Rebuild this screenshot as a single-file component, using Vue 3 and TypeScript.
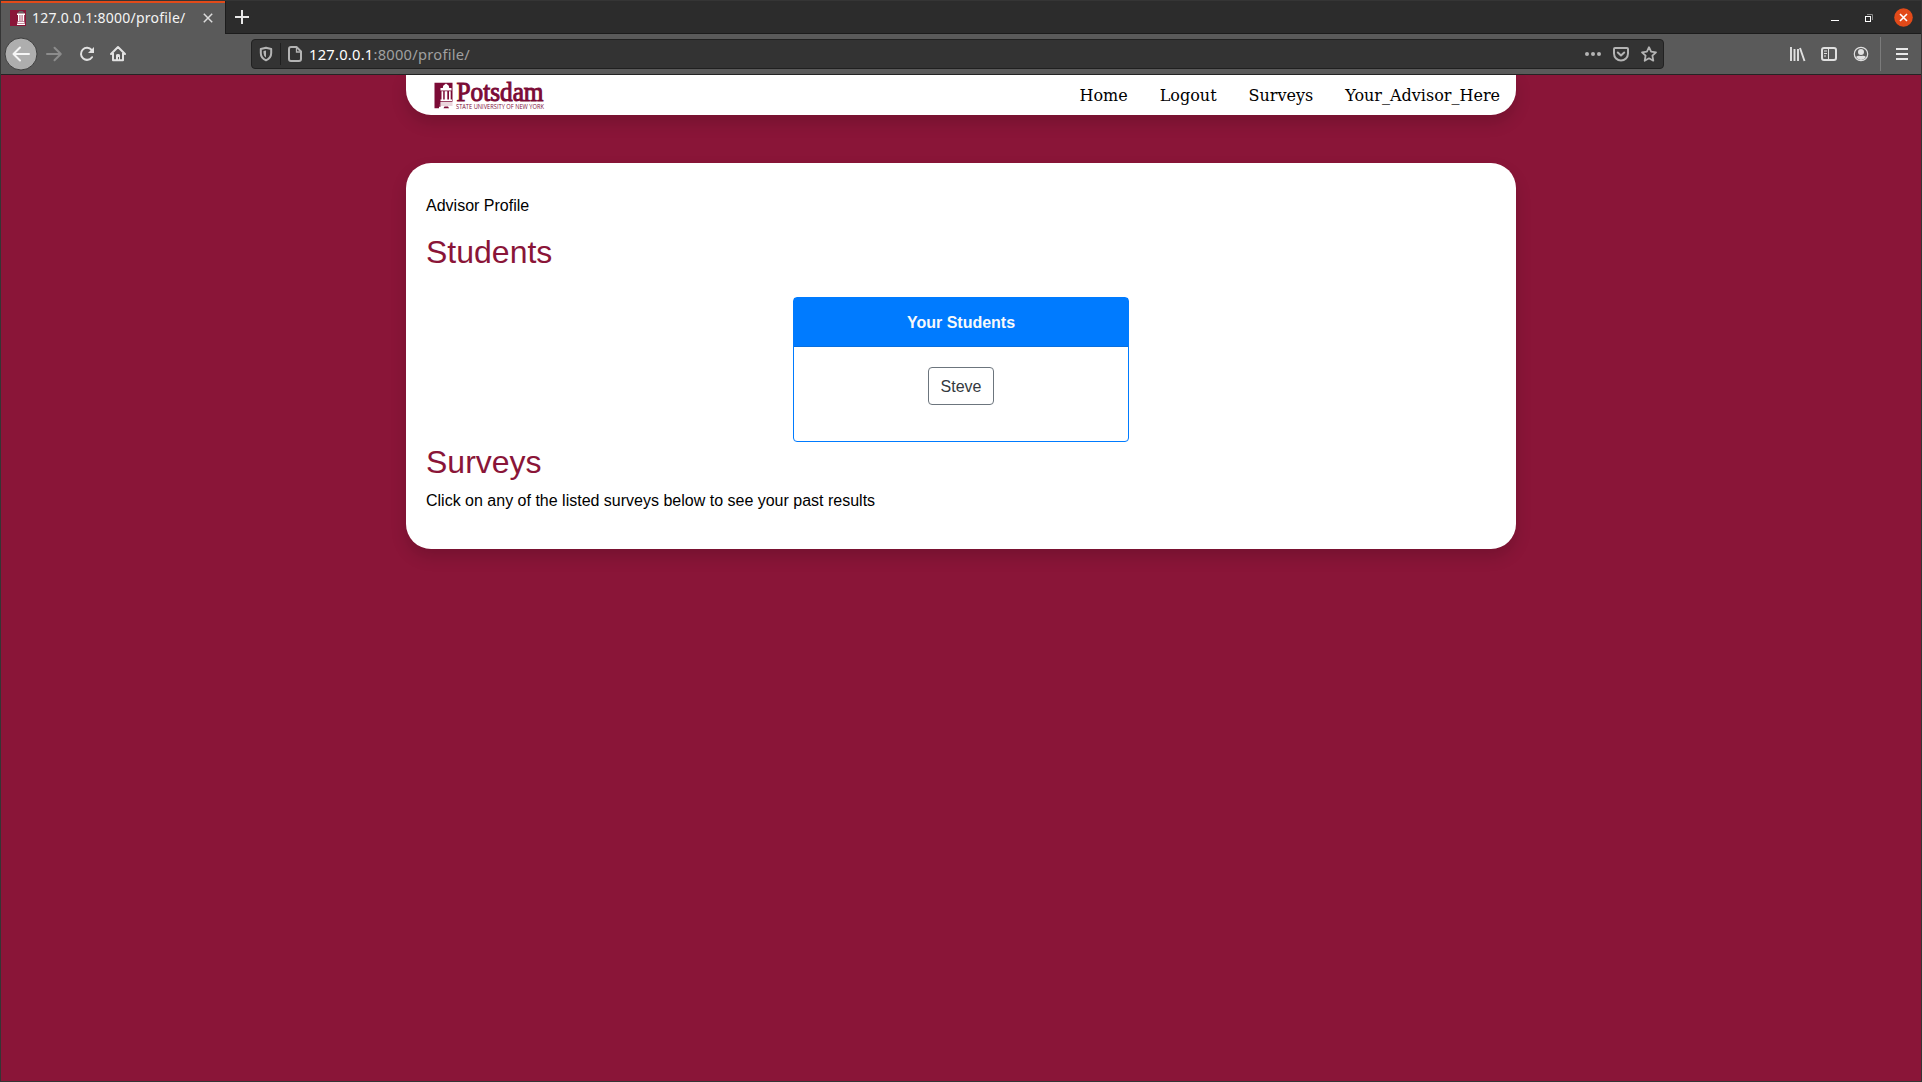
<script setup lang="ts">
const links: string[] = ['Home', 'Logout', 'Surveys', 'Your_Advisor_Here']
const students: string[] = ['Steve']
</script>

<template>
  <div class="window">
    <header class="tabs">
      <div class="tab">
        <svg class="favicon" width="16" height="16" viewBox="0 0 16 16">
          <rect width="16" height="16" fill="#8a1538" />
          <path d="M7 3.500L9.500 1h3L15 3.500z" fill="#6b6062" />
          <path d="M7 3.500h8V5H7zM8 5h1.500v6H8zM12.700 5h1.500v6h-1.500zM7.500 11.500h7V13h-7zM7 13.500h8V15H7z" fill="#fff" />
          <path d="M9.500 5h3.200v6H9.500z" fill="#d9b3bf" />
        </svg>
        <span class="tab-title">127.0.0.1:8000/profile/</span>
        <svg class="tab-close" width="10" height="10" viewBox="0 0 10 10"><path d="M.8.8l8.4 8.4M9.2.8L.8 9.2" stroke="#dcdcdc" stroke-width="1.5" /></svg>
      </div>
      <div class="new-tab">
        <svg width="14" height="14" viewBox="0 0 14 14"><path d="M7 0v14M0 7h14" stroke="#e8e8e8" stroke-width="2" /></svg>
      </div>
      <div class="controls">
        <svg width="8" height="2" viewBox="0 0 8 2"><rect y="1" width="8" height="1" fill="#fff" /></svg>
        <svg width="8" height="8" viewBox="0 0 8 8"><path d="M2 .5h5.5V6" fill="none" stroke="#888" /><rect x=".5" y="2.5" width="5" height="5" fill="none" stroke="#fff" /></svg>
        <svg width="19" height="19" viewBox="0 0 19 19"><circle cx="9.5" cy="9.5" r="9.3" fill="#e24a19" /><path d="M6 6l7 7M13 6l-7 7" stroke="#fff" stroke-width="1.6" /></svg>
      </div>
    </header>

    <div class="toolbar">
      <svg class="back" width="34" height="34" viewBox="0 0 34 34">
        <circle cx="17" cy="17" r="16" fill="#aeaeae" stroke="#3e3e3e" />
        <path d="M25 17H10M16 10.5L9.5 17l6.500 6.500" fill="none" stroke="#f5f5f5" stroke-width="2" stroke-linecap="round" stroke-linejoin="round" />
      </svg>
      <svg class="forward" width="16" height="16" viewBox="0 0 16 16"><path d="M1 8h13M8.500 1.700L14.800 8l-6.300 6.300" fill="none" stroke="#8c8c8c" stroke-width="2" stroke-linecap="round" stroke-linejoin="round" /></svg>
      <svg class="reload" width="16" height="16" viewBox="0 0 16 16"><path d="M12.600 4A6 6 0 1 0 13 11.200" fill="none" stroke="#e2e2e2" stroke-width="2" stroke-linecap="round" /><path d="M15 1v6H9z" fill="#e2e2e2" /></svg>
      <svg class="home" width="16" height="16" viewBox="0 0 16 16"><path d="M1 8l7-7 7 7M3 7v7.200h10V7" fill="none" stroke="#e2e2e2" stroke-width="2" stroke-linecap="round" stroke-linejoin="round" /><path d="M6 14V9.300Q6 8 8 8t2 1.300V14H9v-3H8v3z" fill="#e2e2e2" /></svg>

      <div class="address">
        <svg class="shield" width="14" height="16" viewBox="0 0 14 16"><path d="M7 1.700L12.200 3v4q0 5-5.200 7.300Q1.800 12 1.800 7V3z" fill="none" stroke="#b4b4b4" stroke-width="2" stroke-linejoin="round" /><path d="M7 4.400v7Q4.500 10 4.500 7V5z" fill="#b4b4b4" /></svg>
        <span class="split"></span>
        <svg class="page" width="14" height="16" viewBox="0 0 14 16"><path d="M3 1h5.500L13 5.500V13q0 2-2 2H3q-2 0-2-2V3q0-2 2-2z" fill="none" stroke="#b4b4b4" stroke-width="2" stroke-linejoin="round" /><path d="M8.500 1v5H13" fill="none" stroke="#b4b4b4" stroke-width="1.300" /></svg>
        <span class="url"><b>127.0.0.1</b>:8000/profile/</span>
        <div class="address-actions">
          <svg width="16" height="16" viewBox="0 0 16 16" fill="#b4b4b4"><circle cx="2" cy="8" r="2" /><circle cx="8" cy="8" r="2" /><circle cx="14" cy="8" r="2" /></svg>
          <svg width="16" height="16" viewBox="0 0 16 16" fill="none" stroke="#b4b4b4" stroke-width="2" stroke-linecap="round" stroke-linejoin="round"><path d="M2 2h12q1 0 1 1v4.500a7 7 0 0 1-14 0V3q0-1 1-1zM4.800 6.500L8 9.500l3.200-3" /></svg>
          <svg width="16" height="16" viewBox="0 0 16 16" fill="none" stroke="#b4b4b4" stroke-width="1.800" stroke-linejoin="round"><path d="M8 1.200l2.100 4.500 4.900.6-3.600 3.400.9 5L8 12.300l-4.300 2.400.9-5L1 6.300l4.900-.6z" /></svg>
        </div>
      </div>

      <div class="tools">
        <svg width="16" height="16" viewBox="0 0 16 16"><path d="M2 1v14M5.500 3v12M9 3v12M11 2l4.500 13" fill="none" stroke="#e0e0e0" stroke-width="1.900" /></svg>
        <svg width="16" height="16" viewBox="0 0 16 16"><rect x="1" y="2" width="14" height="12" rx="2" fill="none" stroke="#e0e0e0" stroke-width="2" /><path d="M7.500 2v12M3 5h3M3 7.500h3M3 10h2" stroke="#e0e0e0" /></svg>
        <svg width="16" height="16" viewBox="0 0 16 16"><circle cx="8" cy="8" r="6.700" fill="none" stroke="#e0e0e0" stroke-width="1.200" /><circle cx="8" cy="6" r="3" fill="#e0e0e0" /><path d="M3 11q2-2 5-1 3-1 5 1-2 3-5 3t-5-3z" fill="#e0e0e0" /></svg>
      </div>
      <span class="divider"></span>
      <svg class="menu" width="12" height="12" viewBox="0 0 12 12"><path d="M0 1h12M0 6h12M0 11h12" stroke="#e8e8e8" stroke-width="2" /></svg>
    </div>

    <main class="page-body">
      <nav class="nav">
        <svg class="logo" width="112" height="34" viewBox="0 0 112 34">
          <path d="M.5 2.700h18v19H6.500v5h-1.500v1.600H.5z" fill="#7b0b36" />
          <path d="M12 3.500l2.800 2.300.4 2.200h2.300v2.500h-11V8h2.300l.4-2.200zM7.500 11.300h1.700v8.200H7.500zM10.700 11.300h2.600v8.200h-2.600zM15 11.300h1.700v8.200H15zM6.500 19.500h11.500V21H6.500z" fill="#fff" />
          <path d="M6.500 23h12M5.500 25h13" stroke="#c48a9f" stroke-width=".7" />
          <path d="M9.500 28.200l1-1.700h3.500l1 1.700z" fill="#7b0b36" />
          <text class="logo-name" x="22.5" y="20.7" textLength="87" lengthAdjust="spacingAndGlyphs">Potsdam</text>
          <text class="logo-sub" x="22" y="28.7" textLength="88" lengthAdjust="spacingAndGlyphs">STATE UNIVERSITY OF NEW YORK</text>
        </svg>
        <ul>
          <li v-for="link in links" :key="link"><a>{{ link }}</a></li>
        </ul>
      </nav>

      <section class="panel">
        <p class="kind">Advisor Profile</p>
        <h2>Students</h2>
        <div class="card">
          <div class="card-header">Your Students</div>
          <div class="card-body">
            <button v-for="name in students" :key="name" type="button">{{ name }}</button>
          </div>
        </div>
        <h2>Surveys</h2>
        <p>Click on any of the listed surveys below to see your past results</p>
      </section>
    </main>
  </div>
</template>

<style>
body {
  margin: 0;
  overflow: hidden;
}
</style>

<style scoped>
* {
  box-sizing: border-box;
}
svg {
  display: block;
  flex: none;
  overflow: visible;
}
.window {
  width: 1922px;
  height: 1082px;
  display: flex;
  flex-direction: column;
  border: 1px solid #353535;
  background: #8a1538;
}
.tabs {
  height: 33px;
  display: flex;
  background: #2c2c2c;
  font-family: "Noto Sans", sans-serif;
}
.tab {
  width: 224px;
  display: flex;
  align-items: center;
  background: #5a5a5a;
  border-top: 2px solid #e24a19;
  padding: 0 0 0 9px;
}
.tab-title {
  width: 153px;
  margin-left: 6px;
  padding-bottom: 2px;
  color: #f4f4f4;
  font-size: 14px;
  letter-spacing: 0.24px;
  white-space: nowrap;
}
.favicon,
.tab-close {
  position: relative;
  top: -0.5px;
}
.tab-close {
  margin-left: 18px;
}
.new-tab {
  flex: 1;
  padding: 9px 0 0 9px;
  border-left: 1px solid #1c1c1c;
  border-bottom: 1px solid #1c1c1c;
}
.controls {
  display: flex;
  align-items: center;
  padding: 1px 8px 0 0;
  border-bottom: 1px solid #1c1c1c;
}
.controls svg:nth-child(1) {
  margin: 4px 26px 0 0;
}
.controls svg:nth-child(2) {
  margin-right: 21px;
}
.toolbar {
  height: 41px;
  display: flex;
  align-items: center;
  padding-left: 3px;
  background: #5a5a5a;
  border-bottom: 1px solid #242424;
}
.forward {
  margin-left: 8px;
}
.reload {
  margin-left: 17px;
}
.home {
  margin-left: 15px;
}
.address {
  width: 1413px;
  height: 30px;
  margin-left: 125px;
  display: flex;
  align-items: center;
  padding: 0 6px 0 7px;
  background: #333;
  border: 1px solid #212121;
  border-radius: 4px;
}
.split {
  width: 1px;
  height: 22px;
  margin: 0 7px;
  background: #1f1f1f;
}
.url {
  margin-left: 7px;
  color: #a0a0a0;
  font-family: "Noto Sans", sans-serif;
  font-size: 14.7px;
  line-height: 20px;
  letter-spacing: 0.25px;
}
.url b {
  color: #fff;
  font-weight: 400;
}
.address-actions {
  display: flex;
  gap: 12px;
  margin-left: auto;
}
.tools {
  display: flex;
  gap: 16px;
  margin-left: 125px;
}
.divider {
  width: 1px;
  height: 34px;
  margin: 0 15px 0 11px;
  background: #7b7b7b;
}
.page-body {
  flex: 1;
}
.nav {
  width: 1110px;
  height: 40px;
  margin: 0 auto;
  display: flex;
  justify-content: space-between;
  background: #fff;
  border-radius: 0 0 25px 25px;
  box-shadow: 0 8px 16px rgba(0, 0, 0, 0.15);
}
.logo {
  margin: 5px 0 0 28px;
}
.logo-name {
  fill: #7b0b36;
  stroke: #7b0b36;
  stroke-width: 1px;
  font: 400 26.5px "Liberation Serif", serif;
}
.logo-sub {
  fill: #7b0b36;
  font: 500 6.7px "Open Sans", sans-serif;
}
.nav ul {
  display: flex;
  align-items: center;
  margin: 0;
  padding: 2px 0 0;
  list-style: none;
}
.nav li {
  padding: 0 16px;
  color: #000;
  font: 16px/24px "DejaVu Serif", serif;
}
.panel {
  width: 1110px;
  height: 386px;
  margin: 48px auto 0;
  padding: 31px 20px 20px;
  background: #fff;
  border-radius: 25px;
  box-shadow: 0 8px 16px rgba(0, 0, 0, 0.15);
  color: #000;
  font: 16px/24px "Liberation Sans", Arial, sans-serif;
}
.panel p {
  margin: 0 0 16px;
}
.panel .kind {
  margin-bottom: 15px;
}
.panel h2 {
  margin: 0 0 8px;
  color: #8a1538;
  font-size: 32px;
  font-weight: 400;
  line-height: 38.4px;
}
.card {
  width: 336px;
  height: 145px;
  margin: 25.6px auto 0;
  border: 1px solid #007bff;
  border-radius: 4px;
  text-align: center;
}
.panel .card + h2 {
  padding-top: 1px;
}
.card-header {
  padding: 13px 20px 11px;
  background: #007bff;
  border-bottom: 1px solid #0a6fdd;
  color: #f8f9fa;
  font-weight: 700;
}
.card-body {
  padding: 20px;
}
.card-body button {
  display: block;
  width: 66px;
  height: 38px;
  margin: 0 auto;
  padding: 7px 0 5px;
  background: transparent;
  border: 1px solid #6c757d;
  border-radius: 4px;
  color: #343a40;
  font: inherit;
}
</style>
